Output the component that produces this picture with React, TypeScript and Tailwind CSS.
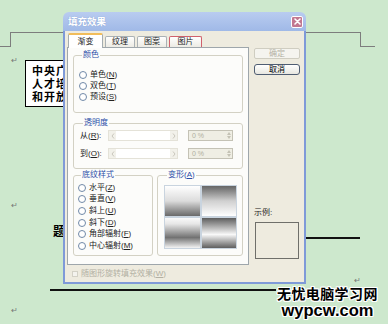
import React from 'react';

const Radio = ({ label, mn, rest }: { label: string; mn: string; rest?: string }) => (
  <div className="flex h-[11px] items-center gap-[3px]">
    <span className="h-[8px] w-[8px] shrink-0 rounded-full border border-[#7189a8] bg-white" />
    <span className="text-[8px] leading-none text-[#222]">
      {label}(<u>{mn}</u>){rest}
    </span>
  </div>
);

const Arrow = ({ dir }: { dir: 'l' | 'r' }) => (
  <span className="flex h-full w-[7px] items-center justify-center">
    <svg width="4" height="6" viewBox="0 0 4 6">
      <path d={dir === 'l' ? 'M3 0.5 L1 3 L3 5.5' : 'M1 0.5 L3 3 L1 5.5'} fill="none" stroke="#c9c7bd" strokeWidth="1" />
    </svg>
  </span>
);

const Slider = () => (
  <div className="flex h-[11px] w-[70px] items-center border border-[#e4e2d8] bg-[#f2f1ea]">
    <Arrow dir="l" />
    <span className="h-[9px] flex-1 bg-white" />
    <Arrow dir="r" />
  </div>
);

const Spin = () => (
  <div className="flex h-[11px] w-[45px] items-center border border-[#c4c2b5] bg-[#efeee4] pl-[3px]">
    <span className="flex-1 text-[7px] leading-none text-[#b0ae9f]">0 %</span>
    <span className="flex h-full w-[7px] flex-col items-center justify-center gap-[1px]">
      <svg width="4" height="3" viewBox="0 0 4 3"><path d="M0 3 L2 0 L4 3Z" fill="#c4c2b5" /></svg>
      <svg width="4" height="3" viewBox="0 0 4 3"><path d="M0 0 L2 3 L4 0Z" fill="#c4c2b5" /></svg>
    </span>
  </div>
);

const Group = ({ title, className, children }: { title: React.ReactNode; className?: string; children: React.ReactNode }) => (
  <fieldset className={`rounded-[3px] border border-[#d3d1c4] ${className ?? ''}`}>
    <legend className="ml-[3px] px-[1px] text-[8px] leading-[10px] text-[#2b4ea8]">{title}</legend>
    {children}
  </fieldset>
);

const Tab = ({ label, active, w, red }: { label: string; active?: boolean; w: string; red?: boolean }) => (
  <div
    className={
      active
        ? `relative z-10 -mb-px flex h-[15px] ${w} items-center justify-center rounded-t-[2px] border-x border-t-2 border-x-[#a4acb0] border-t-[#f1bd5a] bg-white text-[8px] leading-none text-[#222]`
        : `flex h-[11px] ${w} items-center justify-center rounded-t-[2px] border-x border-t ${red ? 'border-[#d0606c]' : 'border-[#aab1b5]'} bg-linear-to-b from-white to-[#ecebe4] text-[8px] leading-none text-[#222]`
    }
  >
    {label}
  </div>
);

const Cell = ({ grad }: { grad: string }) => <div className={`h-[30px] ${grad}`} />;

export default function App() {
  return (
    <div className="relative h-[324px] w-[388px] overflow-hidden bg-[#cde8cd] font-['Liberation_Sans','Noto_Sans_CJK_SC',sans-serif]">
      {/* document behind the dialog */}
      <div className="absolute left-0 top-[46px] h-px w-[10px] bg-[#7d7d7d]" />
      <div className="absolute left-[10px] top-[32px] h-[15px] w-px bg-[#7d7d7d]" />
      <div className="absolute left-[10px] top-[32px] h-px w-[60px] bg-[#7d7d7d]" />
      <div className="absolute left-[300px] top-[32px] h-px w-[60px] bg-[#7d7d7d]" />
      <div className="absolute left-[360px] top-[32px] h-[15px] w-px bg-[#7d7d7d]" />
      <div className="absolute left-[360px] top-[46px] h-px w-[15px] bg-[#7d7d7d]" />

      <span className="absolute left-[11px] top-[57px] text-[8px] leading-none text-[#777]">↵</span>
      <span className="absolute left-[11px] top-[202px] text-[8px] leading-none text-[#777]">↵</span>
      <span className="absolute left-[11px] top-[307px] text-[8px] leading-none text-[#777]">↵</span>
      <span className="absolute left-[354px] top-[277px] text-[8px] leading-none text-[#777]">↵</span>

      <div className="absolute left-[25px] top-[60px] h-[47px] w-[70px] border border-black bg-white pl-[6px] pt-[4px] text-[11px] font-bold leading-[13px] tracking-[1px] text-black">
        <div>中央广播</div>
        <div>人才培养</div>
        <div>和开放</div>
      </div>

      <span className="absolute left-[53px] top-[226px] text-[12px] font-bold leading-none text-black">题</span>

      <div className="absolute left-[300px] top-[237px] h-[2px] w-[60px] bg-[#111]" />
      <div className="absolute left-[50px] top-[289px] h-[2px] w-[226px] bg-[#111]" />

      {/* dialog window */}
      <div className="absolute left-[63px] top-[12px] z-10 flex h-[272px] w-[243px] flex-col">
        <div className="flex h-[19px] items-center justify-between rounded-t-[6px] bg-linear-to-b from-[#b9ccf0] to-[#a0b9e7] pl-[5px] pr-[3px]">
          <span className="text-[9.5px] font-bold leading-none text-white [text-shadow:0_0_1px_#7e96c8]">填充效果</span>
          <span className="flex h-[12px] w-[12px] items-center justify-center rounded-[2px] border border-white bg-[#c27891]">
            <svg width="7" height="7" viewBox="0 0 7 7">
              <path d="M1 1 L6 6 M6 1 L1 6" stroke="white" strokeWidth="1.6" strokeLinecap="round" />
            </svg>
          </span>
        </div>

        <div className="flex flex-1 border-x-2 border-b-2 border-[#7f9ad8] bg-[#eeebdf] pl-[2px] pt-[2px]">
          <div className="flex w-[182px] flex-col">
            <div className="flex h-[14px] items-end gap-[2px] pl-[1px]">
              <Tab label="渐变" active w="w-[35px]" />
              <Tab label="纹理" w="w-[30px]" />
              <Tab label="图案" w="w-[30px]" />
              <Tab label="图片" w="w-[33px]" red />
            </div>

            <div className="flex h-[218px] flex-col border border-[#9ea6ab] bg-[#fcfcfa] px-[5px] pt-[2px]">
              <Group title="颜色" className="pl-[5px] pb-[10px] pt-[9px]">
                <Radio label="单色" mn="N" />
                <Radio label="双色" mn="T" />
                <Radio label="预设" mn="S" />
              </Group>

              <Group title="透明度" className="mt-[5px] pb-[9px] pl-[6px] pt-[2px]">
                <div className="flex h-[11px] items-center">
                  <span className="w-[28px] text-[8px] leading-none text-[#222]">从(<u>R</u>):</span>
                  <Slider />
                  <span className="w-[10px]" />
                  <Spin />
                </div>
                <div className="mt-[7px] flex h-[11px] items-center">
                  <span className="w-[28px] text-[8px] leading-none text-[#222]">到(<u>O</u>):</span>
                  <Slider />
                  <span className="w-[10px]" />
                  <Spin />
                </div>
              </Group>

              <div className="mt-[1px] flex gap-[4px]">
                <Group title="底纹样式" className="w-[80px] pb-[3px] pl-[4px] pt-[2px]">
                  <div className="flex flex-col [&>div]:h-[11.6px]">
                    <Radio label="水平" mn="Z" />
                    <Radio label="垂直" mn="V" />
                    <Radio label="斜上" mn="U" />
                    <Radio label="斜下" mn="D" />
                    <Radio label="角部辐射" mn="F" />
                    <Radio label="中心辐射" mn="M" />
                  </div>
                </Group>
                <Group title={<>变形(<u>A</u>)</>} className="w-[86px] pl-[6px] pt-[5px]">
                  <div className="grid w-[73px] grid-cols-2 gap-[2px] bg-[#c9d4df] p-px">
                    <Cell grad="bg-linear-to-b from-white via-[#dcdcdc] to-[#6a6a6a]" />
                    <Cell grad="bg-linear-to-b from-[#666] via-[#d0d0d0] to-white" />
                    <Cell grad="bg-[linear-gradient(to_bottom,#fafafa,#e6e6e6_20%,#727272_65%,#f4f4f4)]" />
                    <Cell grad="bg-[linear-gradient(to_bottom,#5e5e5e,#f8f8f8_55%,#5e5e5e)]" />
                  </div>
                </Group>
              </div>
            </div>

            <div className="mt-[4px] flex h-[10px] items-center pl-[5px]">
              <span className="h-[6px] w-[6px] border border-[#d3d1c6] bg-[#f4f3ee]" />
              <span className="ml-[3px] text-[8px] leading-none text-[#b2b0a3]">随图形旋转填充效果(<u>W</u>)</span>
            </div>
          </div>

          <div className="ml-[5px] flex w-[46px] flex-col">
            <div className="mt-[15px] flex h-[11px] items-center justify-center rounded-[2px] border border-[#cfcdc1] bg-[#f5f4ef] text-[8px] leading-none text-[#b4b2a5]">
              确定
            </div>
            <div className="mt-[5px] flex h-[11px] items-center justify-center rounded-[3px] border border-[#4f5d72] bg-linear-to-b from-white to-[#e8e7e0] text-[8px] leading-none text-black">
              取消
            </div>
            <span className="mt-[133px] h-[10px] text-[8px] leading-[10px] text-[#222]">示例:</span>
            <div className="ml-[1px] mt-[4px] h-[37px] w-[44px] border border-[#6f6f6a] bg-[#eeebdf]" />
          </div>
        </div>
      </div>

      {/* watermark */}
      <div className="absolute left-[277px] top-[287px] z-20 flex flex-col items-center font-bold leading-none text-black [text-shadow:1px_0_0_#fff,-1px_0_0_#fff,0_1px_0_#fff,0_-1px_0_#fff,1px_1px_0_#fff,-1px_-1px_0_#fff,1px_-1px_0_#fff,-1px_1px_0_#fff]">
        <span className="text-[14px] tracking-[0.4px]">无忧电脑学习网</span>
        <span className="mt-[1px] text-[16.5px]">wypcw.com</span>
      </div>
    </div>
  );
}
